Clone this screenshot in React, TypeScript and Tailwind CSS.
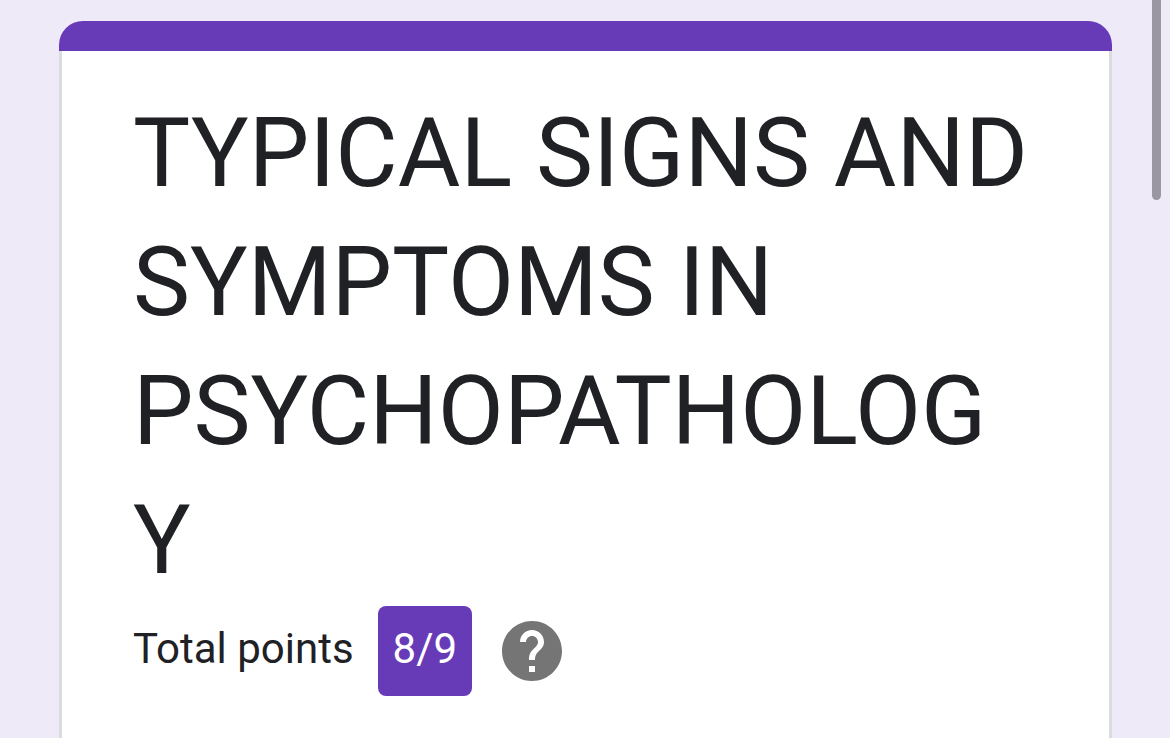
import React from "react";
import { MdHelp } from "react-icons/md";

const form = {
  title: "TYPICAL SIGNS AND SYMPTOMS IN PSYCHOPATHOLOGY",
  score: 8,
  total: 9,
};

function ScoreRow({ score, total }: { score: number; total: number }) {
  return (
    <div className="flex items-center text-[42px] leading-[60px]">
      <span className="pb-1">Total points</span>
      <span className="ml-6 rounded-lg bg-[#673ab7] px-[15px] pt-[13px] pb-[17px] text-white">
        {score}/{total}
      </span>
      <button type="button" aria-label="Help" className="ml-6 text-[#757575]">
        <MdHelp size={72} />
      </button>
    </div>
  );
}

export default function App() {
  return (
    <div className="relative flex min-h-screen flex-col bg-[#eeeaf8] font-['Roboto',sans-serif] text-[#202124]">
      <main className="mr-[58px] ml-[59px] flex grow flex-col pt-[21px]">
        <div className="h-[30px] rounded-t-3xl bg-[#673ab7]" />
        <div className="grow border-x-[3px] border-[#dadce0] bg-white px-[71px] pt-[38px] pb-8">
          <h1 className="mb-px text-[96px] leading-[129px] wrap-anywhere">{form.title}</h1>
          <ScoreRow score={form.score} total={form.total} />
        </div>
      </main>
      <div className="absolute top-0 right-[9px] h-[200px] w-[9px] rounded-b-full bg-[#9a97a3]" />
    </div>
  );
}
